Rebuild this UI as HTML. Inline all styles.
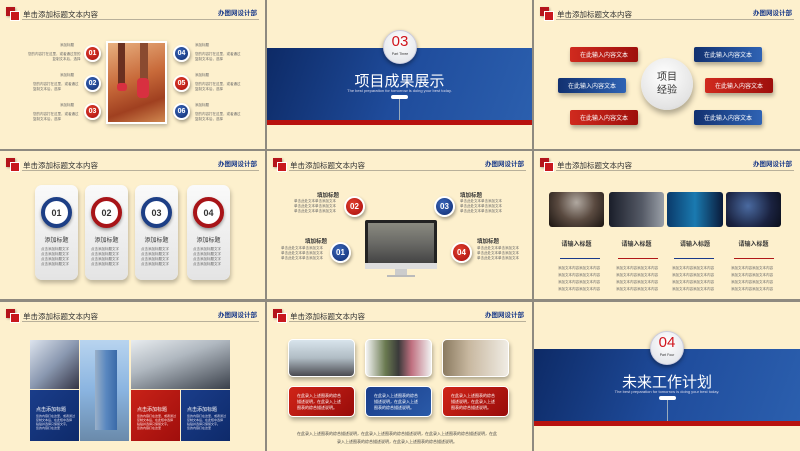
<!DOCTYPE html><html><head><meta charset="utf-8"><style>
*{margin:0;padding:0;box-sizing:border-box}
body{width:800px;height:451px;background:#8e8a80;position:relative;overflow:hidden;font-family:"Liberation Sans","Noto Sans CJK SC",sans-serif}
.s{position:absolute;background:#fdf0cd;overflow:hidden}
.a{position:absolute}
.ic{position:absolute;left:6px;top:7px;width:9px;height:9px;background:#b4141b;box-shadow:1px 1px 2px rgba(0,0,0,.3)}
.ic:after{content:"";position:absolute;left:4px;top:4px;width:8px;height:8px;background:#c8181e;border:1px solid #fff}
.ht{position:absolute;left:23px;top:9px;font-size:7.5px;color:#333;white-space:nowrap}
.hl{position:absolute;left:22px;top:19px;right:6px;height:1px;background:#b8b09a}
.hr{position:absolute;right:8px;top:7px;font-size:6.5px;color:#1a3a8a;font-weight:bold;white-space:nowrap}
.t{position:absolute;font-size:3.5px;color:#666;line-height:5px;white-space:nowrap}
.c{position:absolute;border-radius:50%;color:#fff;font-weight:bold;display:flex;align-items:center;justify-content:center;border:2px solid #fff;box-shadow:1px 2px 3px rgba(0,0,0,.35)}
.r{background:radial-gradient(circle at 40% 35%,#e0402e,#a80d0d)}
.b{background:radial-gradient(circle at 40% 35%,#3a66b8,#0f2c72)}
.btn{position:absolute;width:68px;height:15px;border-radius:2px;color:#fff;font-size:6px;display:flex;align-items:center;justify-content:center;box-shadow:1px 3px 4px rgba(0,0,0,.3)}
.rb{background:linear-gradient(90deg,#d02a1e,#9e0f0c)}
.bb{background:linear-gradient(90deg,#123170,#2f63b4)}
</style></head><body>

<!-- Slide 1 -->
<div class="s" style="left:0;top:0;width:265px;height:149px">
<div class="ic"></div><div class="ht">单击添加标题文本内容</div><div class="hl"></div><div class="hr">办图网设计部</div>
<div class="a" style="left:106px;top:41px;width:61px;height:83px;background:#fff;padding:2px;box-shadow:1px 2px 4px rgba(0,0,0,.25)"><div style="width:100%;height:100%;background:linear-gradient(160deg,#e8b080,#c86a3a 45%,#a04020 75%,#d08850)"></div></div>
<div class="a" style="left:118px;top:43px;width:7px;height:45px;background:#6a3020"></div><div class="a" style="left:140px;top:43px;width:8px;height:40px;background:#8a4a30"></div>
<div class="a" style="left:117px;top:83px;width:10px;height:8px;background:#d83040;border-radius:3px"></div><div class="a" style="left:137px;top:78px;width:12px;height:20px;background:#d83040;border-radius:4px"></div>
<div class="c r" style="left:84px;top:45px;width:17px;height:17px;font-size:7px">01</div>
<div class="c b" style="left:84px;top:75px;width:17px;height:17px;font-size:7px">02</div>
<div class="c r" style="left:84px;top:103px;width:17px;height:17px;font-size:7px">03</div>
<div class="c b" style="left:173px;top:45px;width:17px;height:17px;font-size:7px">04</div>
<div class="c r" style="left:173px;top:75px;width:17px;height:17px;font-size:7px">05</div>
<div class="c b" style="left:173px;top:103px;width:17px;height:17px;font-size:7px">06</div>
<div class="t" style="left:60px;top:43px">添加标题</div><div class="t" style="left:28px;top:52px;text-align:right">您的内容打在这里，或者通过您的<br>复制文本后，选择</div>
<div class="t" style="left:60px;top:73px">添加标题</div><div class="t" style="left:33px;top:82px">您的内容打在这里，或者通过<br>复制文本后，选择</div>
<div class="t" style="left:60px;top:103px">添加标题</div><div class="t" style="left:33px;top:112px">您的内容打在这里，或者通过<br>复制文本后，选择</div>
<div class="t" style="left:195px;top:43px">添加标题</div><div class="t" style="left:195px;top:52px">您的内容打在这里，或者通过<br>复制文本后，选择</div>
<div class="t" style="left:195px;top:73px">添加标题</div><div class="t" style="left:195px;top:82px">您的内容打在这里，或者通过<br>复制文本后，选择</div>
<div class="t" style="left:195px;top:103px">添加标题</div><div class="t" style="left:195px;top:112px">您的内容打在这里，或者通过<br>复制文本后，选择</div>
</div>

<!-- Slide 2 -->
<div class="s" style="left:267px;top:0;width:265px;height:149px">
<div class="a" style="left:0;top:48px;width:265px;height:72px;background:linear-gradient(110deg,#0d2a66,#1f4c9c 50%,#2b5fae)"></div>
<div class="a" style="left:0;top:120px;width:265px;height:5px;background:#b8120e"></div>
<div class="a" style="left:132px;top:97px;width:1px;height:23px;background:#9ab"></div>
<div class="a" style="left:124px;top:95px;width:17px;height:4px;background:#fff;border-radius:2px"></div>
<div class="a" style="left:116px;top:30px;width:34px;height:34px;border-radius:50%;background:radial-gradient(circle at 50% 35%,#fff,#dde0e6);box-shadow:0 2px 4px rgba(0,0,0,.4);border:1px solid #ccd"></div>
<div class="a" style="left:116px;top:33px;width:34px;text-align:center;font-size:15px;color:#d0141c">03</div>
<div class="a" style="left:116px;top:52px;width:34px;text-align:center;font-size:3.5px;color:#333">Part Three</div>
<div class="a" style="left:0;top:70px;width:265px;text-align:center;font-size:15px;color:#fff">项目成果展示</div>
<div class="a" style="left:0;top:88px;width:265px;text-align:center;font-size:4px;color:#dde">The best preparation for tomorrow is doing your best today.</div>
</div>

<!-- Slide 3 -->
<div class="s" style="left:534px;top:0;width:266px;height:149px">
<div class="ic"></div><div class="ht">单击添加标题文本内容</div><div class="hl"></div><div class="hr">办图网设计部</div>
<div class="btn rb" style="left:36px;top:47px">在此输入内容文本</div>
<div class="btn bb" style="left:24px;top:78px">在此输入内容文本</div>
<div class="btn rb" style="left:36px;top:110px">在此输入内容文本</div>
<div class="btn bb" style="left:160px;top:47px">在此输入内容文本</div>
<div class="btn rb" style="left:171px;top:78px">在此输入内容文本</div>
<div class="btn bb" style="left:160px;top:110px">在此输入内容文本</div>
<div class="a" style="left:107px;top:58px;width:52px;height:52px;border-radius:50%;background:radial-gradient(circle at 45% 35%,#fff,#e4e4e4 70%,#c8c8c8);box-shadow:1px 4px 6px rgba(0,0,0,.3);display:flex;align-items:center;justify-content:center;text-align:center;font-size:10px;line-height:13px;color:#333">项目<br>经验</div>
</div>

<!-- Slide 4 -->
<div class="s" style="left:0;top:151px;width:265px;height:148px">
<div class="ic"></div><div class="ht">单击添加标题文本内容</div><div class="hl"></div><div class="hr">办图网设计部</div>
<div class="a" style="left:35px;top:34px;width:43px;height:95px;border-radius:7px;background:linear-gradient(#fafafa,#e4e4e4);box-shadow:1px 3px 4px rgba(0,0,0,.25)"></div>
<div class="a" style="left:85px;top:34px;width:43px;height:95px;border-radius:7px;background:linear-gradient(#fafafa,#e4e4e4);box-shadow:1px 3px 4px rgba(0,0,0,.25)"></div>
<div class="a" style="left:135px;top:34px;width:43px;height:95px;border-radius:7px;background:linear-gradient(#fafafa,#e4e4e4);box-shadow:1px 3px 4px rgba(0,0,0,.25)"></div>
<div class="a" style="left:187px;top:34px;width:43px;height:95px;border-radius:7px;background:linear-gradient(#fafafa,#e4e4e4);box-shadow:1px 3px 4px rgba(0,0,0,.25)"></div>
<div class="a" style="left:41px;top:46px;width:31px;height:31px;border-radius:50%;border:4px solid #1d3f86;background:#fff;box-shadow:0 2px 3px rgba(0,0,0,.4);font-size:9px;font-weight:bold;color:#333;display:flex;align-items:center;justify-content:center">01</div>
<div class="a" style="left:91px;top:46px;width:31px;height:31px;border-radius:50%;border:4px solid #a81418;background:#fff;box-shadow:0 2px 3px rgba(0,0,0,.4);font-size:9px;font-weight:bold;color:#333;display:flex;align-items:center;justify-content:center">02</div>
<div class="a" style="left:141px;top:46px;width:31px;height:31px;border-radius:50%;border:4px solid #1d3f86;background:#fff;box-shadow:0 2px 3px rgba(0,0,0,.4);font-size:9px;font-weight:bold;color:#333;display:flex;align-items:center;justify-content:center">03</div>
<div class="a" style="left:193px;top:46px;width:31px;height:31px;border-radius:50%;border:4px solid #a81418;background:#fff;box-shadow:0 2px 3px rgba(0,0,0,.4);font-size:9px;font-weight:bold;color:#333;display:flex;align-items:center;justify-content:center">04</div>
<div class="a" style="left:35px;top:84px;width:43px;text-align:center;font-size:6px;color:#333">添加标题</div>
<div class="a" style="left:85px;top:84px;width:43px;text-align:center;font-size:6px;color:#333">添加标题</div>
<div class="a" style="left:135px;top:84px;width:43px;text-align:center;font-size:6px;color:#333">添加标题</div>
<div class="a" style="left:187px;top:84px;width:43px;text-align:center;font-size:6px;color:#333">添加标题</div>
<div class="t" style="left:41px;top:96px">点击添加标题文字<br>点击添加标题文字<br>点击添加标题文字<br>点击添加标题文字</div>
<div class="t" style="left:91px;top:96px">点击添加标题文字<br>点击添加标题文字<br>点击添加标题文字<br>点击添加标题文字</div>
<div class="t" style="left:141px;top:96px">点击添加标题文字<br>点击添加标题文字<br>点击添加标题文字<br>点击添加标题文字</div>
<div class="t" style="left:193px;top:96px">点击添加标题文字<br>点击添加标题文字<br>点击添加标题文字<br>点击添加标题文字</div>
</div>

<!-- Slide 5 -->
<div class="s" style="left:267px;top:151px;width:265px;height:148px">
<div class="ic"></div><div class="ht">单击添加标题文本内容</div><div class="hl"></div><div class="hr">办图网设计部</div>
<div class="a" style="left:98px;top:69px;width:72px;height:49px;background:#222;border-radius:2px;padding:3px 3px 6px"><div style="width:100%;height:100%;background:linear-gradient(#8a8a80,#6a6a66 50%,#444)"></div></div>
<div class="a" style="left:98px;top:112px;width:72px;height:6px;background:#ddd"></div>
<div class="a" style="left:128px;top:118px;width:12px;height:6px;background:#ccc"></div>
<div class="a" style="left:120px;top:124px;width:28px;height:2px;background:#bbb"></div>
<div class="c r" style="left:77px;top:45px;width:21px;height:21px;font-size:8px">02</div>
<div class="c b" style="left:63px;top:91px;width:21px;height:21px;font-size:8px">01</div>
<div class="c b" style="left:167px;top:45px;width:21px;height:21px;font-size:8px">03</div>
<div class="c r" style="left:184px;top:91px;width:21px;height:21px;font-size:8px">04</div>
<div class="a" style="left:50px;top:40px;font-size:5.5px;color:#333;font-weight:bold">填加标题</div>
<div class="t" style="left:27px;top:48px">单击此处文本单击添加文本<br>单击此处文本单击添加文本<br>单击此处文本单击添加文本</div>
<div class="a" style="left:38px;top:86px;font-size:5.5px;color:#333;font-weight:bold">填加标题</div>
<div class="t" style="left:14px;top:95px">单击此处文本单击添加文本<br>单击此处文本单击添加文本<br>单击此处文本单击添加文本</div>
<div class="a" style="left:193px;top:40px;font-size:5.5px;color:#333;font-weight:bold">填加标题</div>
<div class="t" style="left:193px;top:48px">单击此处文本单击添加文本<br>单击此处文本单击添加文本<br>单击此处文本单击添加文本</div>
<div class="a" style="left:210px;top:86px;font-size:5.5px;color:#333;font-weight:bold">填加标题</div>
<div class="t" style="left:210px;top:95px">单击此处文本单击添加文本<br>单击此处文本单击添加文本<br>单击此处文本单击添加文本</div>
</div>

<!-- Slide 6 -->
<div class="s" style="left:534px;top:151px;width:266px;height:148px">
<div class="ic"></div><div class="ht">单击添加标题文本内容</div><div class="hl"></div><div class="hr">办图网设计部</div>
<div class="a" style="left:15px;top:41px;width:55px;height:35px;border-radius:3px;background:radial-gradient(circle at 50% 30%,#b0a8a0,#5a4a40 50%,#1a1410)"></div>
<div class="a" style="left:75px;top:41px;width:55px;height:35px;border-radius:3px;background:linear-gradient(90deg,#1a1e2a,#555a66 60%,#9aa0a8)"></div>
<div class="a" style="left:133px;top:41px;width:56px;height:35px;border-radius:3px;background:linear-gradient(90deg,#0a3a6a,#1a7ab0 50%,#0a1a3a)"></div>
<div class="a" style="left:192px;top:41px;width:55px;height:35px;border-radius:3px;background:radial-gradient(circle at 40% 40%,#4a6aa0,#1a2240 60%,#0a0e1a)"></div>
<div class="a" style="left:15px;top:88px;width:55px;text-align:center;font-size:6px;font-weight:bold;color:#333">请输入标题</div>
<div class="a" style="left:75px;top:88px;width:55px;text-align:center;font-size:6px;font-weight:bold;color:#333">请输入标题</div>
<div class="a" style="left:133px;top:88px;width:56px;text-align:center;font-size:6px;font-weight:bold;color:#333">请输入标题</div>
<div class="a" style="left:192px;top:88px;width:55px;text-align:center;font-size:6px;font-weight:bold;color:#333">请输入标题</div>
<div class="a" style="left:26px;top:107px;width:40px;height:1px;background:#1a3a8a"></div>
<div class="a" style="left:84px;top:107px;width:40px;height:1px;background:#b01818"></div>
<div class="a" style="left:140px;top:107px;width:40px;height:1px;background:#1a3a8a"></div>
<div class="a" style="left:200px;top:107px;width:40px;height:1px;background:#b01818"></div>
<div class="t" style="left:24px;top:114px;line-height:7px">添加文本内容添加文本内容<br>添加文本内容添加文本内容<br>添加文本内容添加文本内容<br>添加文本内容添加文本内容</div>
<div class="t" style="left:82px;top:114px;line-height:7px">添加文本内容添加文本内容<br>添加文本内容添加文本内容<br>添加文本内容添加文本内容<br>添加文本内容添加文本内容</div>
<div class="t" style="left:138px;top:114px;line-height:7px">添加文本内容添加文本内容<br>添加文本内容添加文本内容<br>添加文本内容添加文本内容<br>添加文本内容添加文本内容</div>
<div class="t" style="left:197px;top:114px;line-height:7px">添加文本内容添加文本内容<br>添加文本内容添加文本内容<br>添加文本内容添加文本内容<br>添加文本内容添加文本内容</div>
</div>

<!-- Slide 7 -->
<div class="s" style="left:0;top:302px;width:265px;height:149px">
<div class="ic"></div><div class="ht">单击添加标题文本内容</div><div class="hl"></div><div class="hr">办图网设计部</div>
<div class="a" style="left:30px;top:38px;width:49px;height:49px;background:linear-gradient(135deg,#dde4ee,#8a98b0 50%,#334)"></div>
<div class="a" style="left:80px;top:38px;width:49px;height:101px;background:linear-gradient(#b8d4ef,#8ab4e0 50%,#6a8aaa)"></div>
<div class="a" style="left:95px;top:48px;width:22px;height:80px;background:linear-gradient(90deg,#9ab0c8,#5a88c0 50%,#3a6aa8)"></div>
<div class="a" style="left:131px;top:38px;width:99px;height:49px;background:linear-gradient(160deg,#e8ecef,#b0b8c0 40%,#3a404a)"></div>
<div class="a" style="left:30px;top:88px;width:49px;height:51px;background:linear-gradient(135deg,#1a3d8a,#0e2a6a)"></div>
<div class="a" style="left:131px;top:88px;width:49px;height:51px;background:linear-gradient(135deg,#c82218,#a00e0c)"></div>
<div class="a" style="left:181px;top:88px;width:49px;height:51px;background:linear-gradient(135deg,#1a3d8a,#0e2a6a)"></div>
<div class="a" style="left:36px;top:104px;font-size:5px;color:#fff">点击添加标题</div><div class="t" style="left:36px;top:112px;color:#dde;font-size:3px;line-height:4px">您的内容打在这里，或者通过<br>复制文本后，在此框中选择<br>粘贴并选择只保留文字。<br>您的内容打在这里</div>
<div class="a" style="left:137px;top:104px;font-size:5px;color:#fff">点击添加标题</div><div class="t" style="left:137px;top:112px;color:#fdd;font-size:3px;line-height:4px">您的内容打在这里，或者通过<br>复制文本后，在此框中选择<br>粘贴并选择只保留文字。<br>您的内容打在这里</div>
<div class="a" style="left:187px;top:104px;font-size:5px;color:#fff">点击添加标题</div><div class="t" style="left:187px;top:112px;color:#dde;font-size:3px;line-height:4px">您的内容打在这里，或者通过<br>复制文本后，在此框中选择<br>粘贴并选择只保留文字。<br>您的内容打在这里</div>
</div>

<!-- Slide 8 -->
<div class="s" style="left:267px;top:302px;width:265px;height:149px">
<div class="ic"></div><div class="ht">单击添加标题文本内容</div><div class="hl"></div><div class="hr">办图网设计部</div>
<div class="a" style="left:21px;top:37px;width:67px;height:38px;border-radius:5px;border:1.5px solid #fff;background:linear-gradient(#d8e4ec,#b0bcc4 50%,#4a4a50);box-shadow:1px 3px 4px rgba(0,0,0,.3)"></div>
<div class="a" style="left:98px;top:37px;width:67px;height:38px;border-radius:5px;border:1.5px solid #fff;background:linear-gradient(90deg,#f4f4f4,#6a7a50 30%,#3a3a3a 50%,#c07080 70%,#f0f0f0);box-shadow:1px 3px 4px rgba(0,0,0,.3)"></div>
<div class="a" style="left:175px;top:37px;width:67px;height:38px;border-radius:5px;border:1.5px solid #fff;background:linear-gradient(90deg,#8a7a60,#c8b8a0 40%,#f0ece4);box-shadow:1px 3px 4px rgba(0,0,0,.3)"></div>
<div class="a" style="left:21px;top:84px;width:67px;height:31px;border-radius:5px;border:1.5px solid #fff;background:linear-gradient(135deg,#d02418,#980c0a);box-shadow:1px 3px 4px rgba(0,0,0,.3)"></div>
<div class="a" style="left:98px;top:84px;width:67px;height:31px;border-radius:5px;border:1.5px solid #fff;background:linear-gradient(135deg,#1a3d8a,#2a5aa8);box-shadow:1px 3px 4px rgba(0,0,0,.3)"></div>
<div class="a" style="left:175px;top:84px;width:67px;height:31px;border-radius:5px;border:1.5px solid #fff;background:linear-gradient(135deg,#d02418,#980c0a);box-shadow:1px 3px 4px rgba(0,0,0,.3)"></div>
<div class="t" style="left:30px;top:91px;color:#fff;font-size:4px;line-height:6px">在此录入上述图表的综合<br>描述说明，在此录入上述<br>图表的综合描述说明。</div>
<div class="t" style="left:107px;top:91px;color:#fff;font-size:4px;line-height:6px">在此录入上述图表的综合<br>描述说明，在此录入上述<br>图表的综合描述说明。</div>
<div class="t" style="left:184px;top:91px;color:#fff;font-size:4px;line-height:6px">在此录入上述图表的综合<br>描述说明，在此录入上述<br>图表的综合描述说明。</div>
<div class="t" style="left:30px;top:128px;font-size:4px;line-height:8px;color:#444;text-align:center">在此录入上述图表的综合描述说明，在此录入上述图表的综合描述说明，在此录入上述图表的综合描述说明，在此<br>录入上述图表的综合描述说明，在此录入上述图表的综合描述说明。</div>
</div>

<!-- Slide 9 -->
<div class="s" style="left:534px;top:302px;width:266px;height:149px">
<div class="a" style="left:0;top:47px;width:266px;height:72px;background:linear-gradient(110deg,#0d2a66,#1f4c9c 50%,#2b5fae)"></div>
<div class="a" style="left:0;top:119px;width:266px;height:5px;background:#b8120e"></div>
<div class="a" style="left:133px;top:96px;width:1px;height:23px;background:#9ab"></div>
<div class="a" style="left:125px;top:94px;width:17px;height:4px;background:#fff;border-radius:2px"></div>
<div class="a" style="left:116px;top:29px;width:34px;height:34px;border-radius:50%;background:radial-gradient(circle at 50% 35%,#fff,#dde0e6);box-shadow:0 2px 4px rgba(0,0,0,.4);border:1px solid #ccd"></div>
<div class="a" style="left:116px;top:32px;width:34px;text-align:center;font-size:15px;color:#d0141c">04</div>
<div class="a" style="left:116px;top:51px;width:34px;text-align:center;font-size:3.5px;color:#333">Part Four</div>
<div class="a" style="left:0;top:69px;width:266px;text-align:center;font-size:15px;color:#fff">未来工作计划</div>
<div class="a" style="left:0;top:87px;width:266px;text-align:center;font-size:4px;color:#dde">The best preparation for tomorrow is doing your best today.</div>
</div>
</body></html>
